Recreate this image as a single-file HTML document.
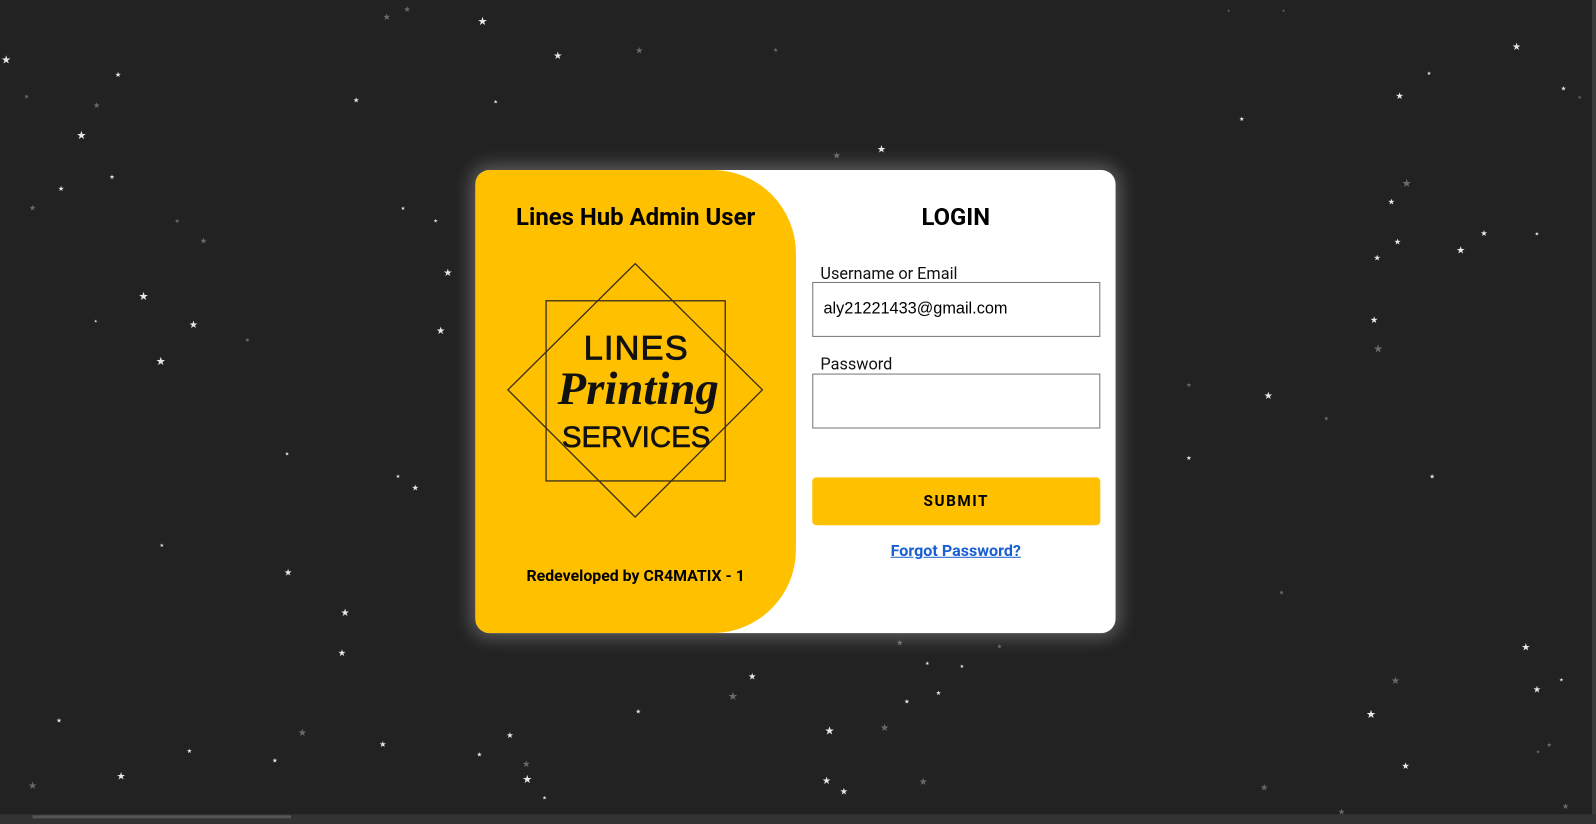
<!DOCTYPE html>
<html><head><meta charset="utf-8">
<style>
html,body{margin:0;padding:0;width:1596px;height:818px;overflow:hidden;background:#222222;font-family:"Roboto","Liberation Sans",sans-serif;}
#wrap{position:absolute;left:0;top:0;width:1568px;height:804px;transform:scale(1.01786);transform-origin:0 0;}
.s{position:absolute;transform:translate(-50%,-50%);line-height:1;font-family:"DejaVu Sans",sans-serif;}
.w{color:#e8e8e8}.g{color:#6a6a6a}
#card{position:absolute;left:467px;top:167px;width:629px;height:455px;background:#fff;border-radius:14px;box-shadow:0 0 18px 4px rgba(255,255,255,0.28);overflow:hidden;}
#left{position:absolute;left:0;top:0;width:315px;height:455px;background:#ffc000;border-radius:0 82px 82px 0;}
.t{position:absolute;font-weight:bold;color:#000;white-space:nowrap;}
</style></head><body>
<div id="wrap">
<div style="position:absolute;left:1564px;top:0;width:4px;height:804px;background:#3b3b3b"></div>
<div style="position:absolute;left:0;top:800px;width:1568px;height:10px;background:#333"></div>
<div style="position:absolute;left:32px;top:801px;width:254px;height:3px;background:#555"></div>
<span class="s w" style="left:6px;top:59px;font-size:11px">★</span>
<span class="s w" style="left:116px;top:74px;font-size:7px">★</span>
<span class="s w" style="left:80px;top:133px;font-size:11px">★</span>
<span class="s w" style="left:60px;top:186px;font-size:7px">★</span>
<span class="s w" style="left:110px;top:175px;font-size:6px">★</span>
<span class="s g" style="left:26px;top:96px;font-size:6px">★</span>
<span class="s g" style="left:95px;top:104px;font-size:8px">★</span>
<span class="s g" style="left:32px;top:205px;font-size:8px">★</span>
<span class="s w" style="left:350px;top:99px;font-size:7px">★</span>
<span class="s g" style="left:380px;top:18px;font-size:9px">★</span>
<span class="s g" style="left:400px;top:10px;font-size:8px">★</span>
<span class="s w" style="left:474px;top:21px;font-size:11px">★</span>
<span class="s w" style="left:548px;top:56px;font-size:10px">★</span>
<span class="s w" style="left:487px;top:101px;font-size:5px">★</span>
<span class="s g" style="left:628px;top:51px;font-size:9px">★</span>
<span class="s g" style="left:762px;top:50px;font-size:6px">★</span>
<span class="s w" style="left:396px;top:206px;font-size:5px">★</span>
<span class="s w" style="left:428px;top:218px;font-size:5px">★</span>
<span class="s g" style="left:174px;top:218px;font-size:6px">★</span>
<span class="s g" style="left:200px;top:237px;font-size:8px">★</span>
<span class="s w" style="left:440px;top:269px;font-size:10px">★</span>
<span class="s w" style="left:141px;top:291px;font-size:11px">★</span>
<span class="s w" style="left:190px;top:320px;font-size:10px">★</span>
<span class="s w" style="left:433px;top:326px;font-size:10px">★</span>
<span class="s w" style="left:158px;top:355px;font-size:11px">★</span>
<span class="s g" style="left:243px;top:335px;font-size:6px">★</span>
<span class="s w" style="left:94px;top:316px;font-size:4px">★</span>
<span class="s w" style="left:282px;top:447px;font-size:5px">★</span>
<span class="s w" style="left:391px;top:469px;font-size:5px">★</span>
<span class="s w" style="left:408px;top:480px;font-size:8px">★</span>
<span class="s w" style="left:159px;top:537px;font-size:5px">★</span>
<span class="s w" style="left:283px;top:564px;font-size:9px">★</span>
<span class="s w" style="left:339px;top:603px;font-size:10px">★</span>
<span class="s w" style="left:336px;top:643px;font-size:9px">★</span>
<span class="s w" style="left:58px;top:709px;font-size:6px">★</span>
<span class="s w" style="left:186px;top:739px;font-size:6px">★</span>
<span class="s w" style="left:119px;top:764px;font-size:10px">★</span>
<span class="s w" style="left:270px;top:748px;font-size:6px">★</span>
<span class="s g" style="left:297px;top:721px;font-size:10px">★</span>
<span class="s w" style="left:376px;top:732px;font-size:8px">★</span>
<span class="s w" style="left:471px;top:742px;font-size:6px">★</span>
<span class="s w" style="left:501px;top:723px;font-size:8px">★</span>
<span class="s g" style="left:517px;top:752px;font-size:9px">★</span>
<span class="s w" style="left:518px;top:766px;font-size:11px">★</span>
<span class="s w" style="left:535px;top:785px;font-size:5px">★</span>
<span class="s w" style="left:627px;top:700px;font-size:6px">★</span>
<span class="s g" style="left:720px;top:684px;font-size:11px">★</span>
<span class="s w" style="left:739px;top:666px;font-size:9px">★</span>
<span class="s w" style="left:815px;top:718px;font-size:11px">★</span>
<span class="s g" style="left:869px;top:716px;font-size:10px">★</span>
<span class="s w" style="left:812px;top:768px;font-size:10px">★</span>
<span class="s w" style="left:829px;top:779px;font-size:9px">★</span>
<span class="s g" style="left:907px;top:769px;font-size:10px">★</span>
<span class="s w" style="left:922px;top:682px;font-size:6px">★</span>
<span class="s w" style="left:911px;top:653px;font-size:5px">★</span>
<span class="s w" style="left:945px;top:656px;font-size:5px">★</span>
<span class="s w" style="left:891px;top:690px;font-size:6px">★</span>
<span class="s g" style="left:884px;top:632px;font-size:8px">★</span>
<span class="s g" style="left:982px;top:636px;font-size:6px">★</span>
<span class="s g" style="left:822px;top:154px;font-size:9px">★</span>
<span class="s w" style="left:866px;top:148px;font-size:10px">★</span>
<span class="s g" style="left:1207px;top:11px;font-size:4px">★</span>
<span class="s g" style="left:1261px;top:11px;font-size:4px">★</span>
<span class="s w" style="left:1375px;top:96px;font-size:9px">★</span>
<span class="s w" style="left:1404px;top:73px;font-size:5px">★</span>
<span class="s w" style="left:1490px;top:47px;font-size:10px">★</span>
<span class="s w" style="left:1536px;top:88px;font-size:6px">★</span>
<span class="s g" style="left:1552px;top:97px;font-size:5px">★</span>
<span class="s w" style="left:1220px;top:118px;font-size:6px">★</span>
<span class="s g" style="left:1382px;top:180px;font-size:11px">★</span>
<span class="s w" style="left:1367px;top:199px;font-size:8px">★</span>
<span class="s w" style="left:1373px;top:238px;font-size:8px">★</span>
<span class="s w" style="left:1353px;top:254px;font-size:8px">★</span>
<span class="s w" style="left:1435px;top:247px;font-size:10px">★</span>
<span class="s w" style="left:1458px;top:230px;font-size:8px">★</span>
<span class="s w" style="left:1510px;top:231px;font-size:5px">★</span>
<span class="s w" style="left:1350px;top:316px;font-size:9px">★</span>
<span class="s g" style="left:1354px;top:343px;font-size:11px">★</span>
<span class="s g" style="left:1168px;top:379px;font-size:6px">★</span>
<span class="s w" style="left:1246px;top:390px;font-size:10px">★</span>
<span class="s g" style="left:1303px;top:412px;font-size:6px">★</span>
<span class="s w" style="left:1168px;top:451px;font-size:6px">★</span>
<span class="s w" style="left:1407px;top:469px;font-size:6px">★</span>
<span class="s g" style="left:1259px;top:583px;font-size:6px">★</span>
<span class="s w" style="left:1499px;top:637px;font-size:10px">★</span>
<span class="s g" style="left:1371px;top:670px;font-size:10px">★</span>
<span class="s w" style="left:1510px;top:679px;font-size:9px">★</span>
<span class="s w" style="left:1534px;top:669px;font-size:5px">★</span>
<span class="s w" style="left:1347px;top:702px;font-size:11px">★</span>
<span class="s w" style="left:1381px;top:754px;font-size:9px">★</span>
<span class="s g" style="left:1522px;top:733px;font-size:6px">★</span>
<span class="s g" style="left:1511px;top:740px;font-size:5px">★</span>
<span class="s g" style="left:1242px;top:775px;font-size:9px">★</span>
<span class="s g" style="left:1318px;top:798px;font-size:8px">★</span>
<span class="s g" style="left:1538px;top:793px;font-size:8px">★</span>
<span class="s g" style="left:32px;top:773px;font-size:10px">★</span>

<div id="card">
  <div id="left">
    <div class="t" style="left:0;width:315px;text-align:center;top:32px;font-size:23.5px;">Lines Hub Admin User</div>
    <svg style="position:absolute;left:0;top:0" width="315" height="455">
      <rect x="69.5" y="128.5" width="176" height="177" fill="none" stroke="#3a2e1a" stroke-width="1.3"/>
      <polygon points="157,92 282,216 157,341 32,216" fill="none" stroke="#3a2e1a" stroke-width="1.3"/>
      <text x="158" y="186" text-anchor="middle" font-family="Liberation Sans, sans-serif" font-size="34" fill="#111" stroke="#111" stroke-width="0.8" letter-spacing="1">LINES</text>
      <text x="160" y="230" text-anchor="middle" font-family="Liberation Serif, serif" font-style="italic" font-weight="bold" font-size="46" fill="#111">Printing</text>
      <text x="158" y="272" text-anchor="middle" font-family="Liberation Sans, sans-serif" font-size="29" fill="#111" stroke="#111" stroke-width="0.6">SERVICES</text>
    </svg>
    <div class="t" style="left:0;width:315px;text-align:center;top:390px;font-size:15.6px;">Redeveloped by CR4MATIX - 1</div>
  </div>
  <div class="t" style="left:315px;width:314px;text-align:center;top:32px;font-size:23.4px;">LOGIN</div>
  <div style="position:absolute;left:339px;top:92px;font-size:16px;color:#111">Username or Email</div>
  <div style="position:absolute;left:331px;top:110px;width:283px;height:54px;border:1px solid #767676;box-sizing:border-box;"></div>
  <div style="position:absolute;left:342px;top:128px;font-size:16px;color:#000;font-family:'Liberation Sans',sans-serif">aly21221433@gmail.com</div>
  <div style="position:absolute;left:339px;top:181px;font-size:16px;color:#111">Password</div>
  <div style="position:absolute;left:331px;top:200px;width:283px;height:54px;border:1px solid #767676;box-sizing:border-box;"></div>
  <div style="position:absolute;left:331px;top:302px;width:283px;height:47px;background:#ffc000;border-radius:4px;text-align:center;line-height:47px;font-weight:bold;font-size:15px;letter-spacing:1.5px;">SUBMIT</div>
  <div style="position:absolute;left:315px;width:314px;text-align:center;top:364px;font-size:15.8px;font-weight:bold;color:#1a5fd0;text-decoration:underline;">Forgot Password?</div>
</div>
</div>
</body></html>
